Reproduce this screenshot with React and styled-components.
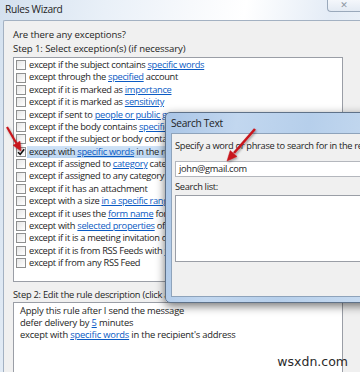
import React from "react";
import styled, { createGlobalStyle } from "styled-components";

const GlobalStyle = createGlobalStyle`
  html, body { margin: 0; padding: 0; }
  body {
    width: 360px;
    height: 372px;
    overflow: hidden;
    background: #fff;
    font-family: "Open Sans", "Noto Sans", sans-serif;
    font-size: 9.3px;
    letter-spacing: -0.32px;
    color: #1e1e1e;
  }
`;

const exceptions = [
  ["except if the subject contains ", "specific words", ""],
  ["except through the ", "specified", " account"],
  ["except if it is marked as ", "importance", ""],
  ["except if it is marked as ", "sensitivity", ""],
  ["except if sent to ", "people or public group", ""],
  ["except if the body contains ", "specific words", ""],
  ["except if the subject or body contains ", "specific words", ""],
  ["except with ", "specific words", " in the recipient's address", true],
  ["except if assigned to ", "category", " category"],
  ["except if assigned to any category", "", ""],
  ["except if it has an attachment", "", ""],
  ["except with a size ", "in a specific range", ""],
  ["except if it uses the ", "form name", " form"],
  ["except with ", "selected properties", " of documents or forms"],
  ["except if it is a meeting invitation or update", "", ""],
  ["except if it is from RSS Feeds with ", "text", " in the title"],
  ["except if from any RSS Feed", "", ""],
];

function App() {
  return (
    <>
      <GlobalStyle />
      <Window>
        <TitleBar>
          <WindowTitle>Rules Wizard</WindowTitle>
          <CloseButton>✕</CloseButton>
        </TitleBar>

        <Client>
          <Label>Are there any exceptions?</Label>
          <Label>Step 1: Select exception(s) (if necessary)</Label>
          <ExceptionList>
            {exceptions.map(([before, link, after, checked], i) => (
              <Row key={i}>
                <CheckBox $checked={checked}>
                  {checked && (
                    <svg viewBox="0 0 10 10" width="10" height="10">
                      <path d="M2 5.2 L4.2 7.4 L8.2 2.2" fill="none" stroke="#111" strokeWidth="1.6" />
                    </svg>
                  )}
                </CheckBox>
                <RowText $selected={checked}>
                  {before}
                  {link && <Link>{link}</Link>}
                  {after}
                </RowText>
              </Row>
            ))}
          </ExceptionList>

          <Label $step2>Step 2: Edit the rule description (click an underlined value)</Label>
          <Description>
            <DescLine>Apply this rule after I send the message</DescLine>
            <DescLine>defer delivery by <Link>5</Link> minutes</DescLine>
            <DescLine>except with <Link>specific words</Link> in the recipient's address</DescLine>
          </Description>
        </Client>

        <Dialog>
          <DialogTitle>Search Text</DialogTitle>
          <DialogClient>
            <DialogLabel>Specify a word or phrase to search for in the recipient's address:</DialogLabel>
            <TextInput>john@gmail.com</TextInput>
            <DialogLabel $gap>Search list:</DialogLabel>
            <SearchList />
          </DialogClient>
        </Dialog>

        <Arrows viewBox="0 0 360 372" width="360" height="372">
          <defs>
            <filter id="sh" x="-20%" y="-20%" width="140%" height="140%">
              <feDropShadow dx="1" dy="1.5" stdDeviation="1" floodColor="#000" floodOpacity="0.35" />
            </filter>
          </defs>
          <g filter="url(#sh)" fill="#c8161d" stroke="#c8161d">
            <line x1="7" y1="127" x2="16.5" y2="143.5" strokeWidth="2.2" />
            <path d="M21 151 L13 145.2 L20 141.2 Z" strokeWidth="0.5" />
            <line x1="255" y1="129" x2="234" y2="153" strokeWidth="2.6" />
            <path d="M227 161 L237 156.5 L230.2 150.5 Z" strokeWidth="0.5" />
          </g>
        </Arrows>

        <Watermark>wsxdn.com</Watermark>
      </Window>
    </>
  );
}

const Window = styled.div`
  position: relative;
  width: 360px;
  height: 372px;
  overflow: hidden;
  display: flex;
  flex-direction: column;
  background: linear-gradient(100deg, #d4e1ef 0%, #e9f0f8 25%, #f7f9fc 45%, #ffffff 58%, #e4ecf6 78%, #f3f7fb 100%);
`;

const TitleBar = styled.div`
  height: 20px;
  display: flex;
  align-items: center;
  padding-left: 5px;
`;

const WindowTitle = styled.span`
  font-size: 10.2px;
  letter-spacing: -0.3px;
  margin-top: -2px;
`;

const CloseButton = styled.div`
  margin-left: auto;
  align-self: flex-start;
  width: 33px;
  height: 12px;
  box-sizing: border-box;
  border: 1px solid #9aa9bb;
  border-top: none;
  border-right: none;
  border-radius: 0 0 0 4px;
  background: linear-gradient(#f4f7fb, #e3eaf3);
  color: #8d97a3;
  font-size: 9px;
  line-height: 10px;
  text-align: center;
  letter-spacing: 0;
  font-family: "DejaVu Sans", sans-serif;
`;

const Client = styled.div`
  flex: 1;
  margin-left: 3px;
  border-top: 1px solid #a3b1c2;
  border-left: 1px solid #a3b1c2;
  border-top-left-radius: 2px;
  background: #f0f0f0;
  padding: 7px 0 0 9px;
  display: flex;
  flex-direction: column;
`;

const Label = styled.div`
  font-size: ${(p) => (p.$step2 ? "9.3px" : "9.6px")};
  letter-spacing: ${(p) => (p.$step2 ? "-0.25px" : "-0.1px")};
  line-height: 14px;
  white-space: nowrap;
  margin-top: ${(p) => (p.$step2 ? "6px" : "0")};
`;

const ExceptionList = styled.div`
  margin-top: 1px;
  width: 330px;
  height: 225px;
  box-sizing: border-box;
  border: 1px solid #9a9ea6;
  background: #fff;
  padding: 1px 0 0 2px;
  overflow: hidden;
`;

const Row = styled.div`
  height: 12.375px;
  display: flex;
  align-items: center;
`;

const CheckBox = styled.span`
  flex: none;
  width: 10px;
  height: 10px;
  box-sizing: border-box;
  border: 1px solid #8e8f8f;
  background: linear-gradient(135deg, #e6e6e6, #ffffff);
  display: flex;
  align-items: center;
  justify-content: center;
  margin-right: 1px;
  svg { margin: -1px; }
`;

const RowText = styled.span`
  flex: 1;
  height: 12.375px;
  line-height: 12.375px;
  padding-left: 2px;
  white-space: nowrap;
  background: ${(p) => (p.$selected ? "linear-gradient(#d0e3f7, #bcd5f0)" : "transparent")};
`;

const Link = styled.span`
  color: #0b5bc4;
  text-decoration: underline;
`;

const Description = styled.div`
  flex: 1;
  width: 330px;
  box-sizing: border-box;
  border: 1px solid #9a9ea6;
  border-bottom: none;
  background: #fff;
  padding: 2px 6px;
`;

const DescLine = styled.div`
  font-size: 9.4px;
  letter-spacing: -0.2px;
  line-height: 12px;
  white-space: nowrap;
`;

const Dialog = styled.div`
  position: absolute;
  left: 165px;
  top: 112px;
  width: 210px;
  height: 191px;
  box-sizing: border-box;
  border: 1px solid #5f7289;
  border-radius: 5px 0 0 5px;
  padding: 0 0 5px 5px;
  display: flex;
  flex-direction: column;
  background: linear-gradient(100deg, #a9c5e6 0%, #c2d7ef 30%, #b6cfeb 60%, #c9dcf1 100%);
  box-shadow: 0 3px 10px rgba(0, 0, 0, 0.55);
`;

const DialogTitle = styled.div`
  height: 20px;
  display: flex;
  align-items: center;
  font-size: 10.2px;
  letter-spacing: -0.3px;
`;

const DialogClient = styled.div`
  flex: 1;
  background: #f0f0f0;
  border: 1px solid #8ea3bb;
  border-right: none;
  padding: 6px 0 0 3px;
  display: flex;
  flex-direction: column;
`;

const DialogLabel = styled.div`
  line-height: 12px;
  white-space: nowrap;
  margin-top: ${(p) => (p.$gap ? "4px" : "0")};
`;

const TextInput = styled.div`
  margin-top: 9px;
  height: 16px;
  box-sizing: border-box;
  border: 1px solid #b4b7bd;
  border-right: none;
  background: #fff;
  padding-left: 3px;
  line-height: 14px;
`;

const SearchList = styled.div`
  margin-top: 2px;
  height: 67px;
  box-sizing: border-box;
  border: 1px solid #9a9ea6;
  border-right: none;
  background: #fff;
`;

const Arrows = styled.svg`
  position: absolute;
  left: 0;
  top: 0;
  pointer-events: none;
`;

const Watermark = styled.div`
  position: absolute;
  right: 12px;
  bottom: 3px;
  font-family: "DejaVu Sans", sans-serif;
  font-size: 12.5px;
  letter-spacing: 0;
  color: #2a2a2a;
`;

export default App;
